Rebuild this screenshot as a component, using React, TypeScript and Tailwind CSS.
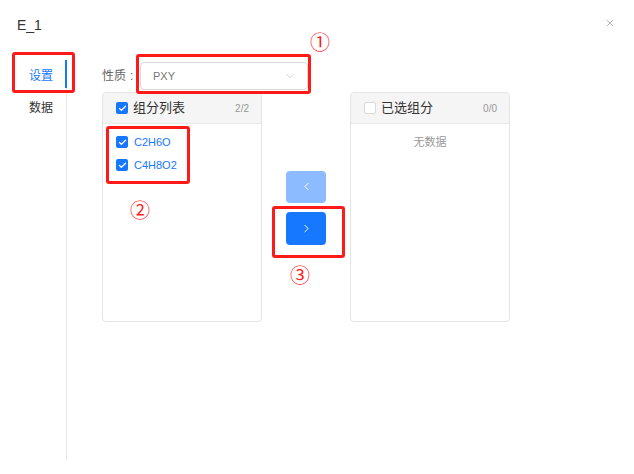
import { ChevronDown, ChevronLeft, ChevronRight, X, Check } from "lucide-react";

const Box = ({ checked }: { checked: boolean }) => (
    <span
        className={
            checked
                ? "flex h-[12px] w-[12px] items-center justify-center rounded-[2px] bg-[#1677ff]"
                : "flex h-[12px] w-[12px] rounded-[2px] border border-[#d9d9d9] bg-white"
        }
    >
        {checked && <Check size={9} strokeWidth={3.5} color="#fff" />}
    </span>
);

const Mark = ({ className }: { className: string }) => (
    <div className={"absolute rounded-[3px] border-[3px] border-[#ff1a1a] " + className} />
);

const Num = ({ className, n }: { className: string; n: string }) => (
    <span className={"absolute text-[20px] leading-none text-[#ff1a1a] " + className}>{n}</span>
);

const App = (): JSX.Element => {
    return (
        <div
            className="relative h-[474px] w-[634px] overflow-hidden bg-white text-[#333]"
            style={{ fontFamily: '"Liberation Sans", "Noto Sans CJK SC", sans-serif' }}
        >
            <header className="flex h-[50px] items-start justify-between pl-[17px] pr-[18px] pt-[16px]">
                <h1 className="text-[14px] leading-[18px] text-[#333]">E_1</h1>
                <X size={12} strokeWidth={1.4} color="#999" className="mt-[1px]" />
            </header>

            <div className="mt-[10px] flex">
                {/* side tabs */}
                <aside className="h-[400px] w-[67px] border-r border-[#e8e8e8] text-[12px]">
                    <div className="relative flex h-[32px] items-center pl-[29px] text-[#1677ff]">
                        设置
                        <span className="absolute right-[-1px] top-0 h-[28px] w-[2px] bg-[#1677ff]" />
                    </div>
                    <div className="flex h-[32px] items-center pl-[29px] text-[#333]">数据</div>
                </aside>

                <main className="flex-1 pl-[35px] pt-[2px]">
                    <div className="flex items-center text-[12px]">
                        <span className="flex w-[38px] text-[#666]">
                            性质<span className="ml-[4px]">:</span>
                        </span>
                        <div className="flex h-[28px] w-[168px] items-center justify-between rounded-[4px] border border-[#d9d9d9] pl-[12px] pr-[10px] text-[11px] text-[#777]">
                            PXY
                            <ChevronDown size={14} strokeWidth={1.2} color="#bfbfbf" />
                        </div>
                    </div>

                    <div className="mt-[2px] flex">
                        {/* source list */}
                        <div className="h-[230px] w-[160px] overflow-hidden rounded-[4px] border border-[#e4e4e4]">
                            <div className="flex h-[31px] items-center border-b border-[#e8e8e8] bg-[#f5f5f5] pl-[13px] pr-[12px]">
                                <Box checked />
                                <span className="ml-[5px] text-[13px] text-[#333]">组分列表</span>
                                <span className="ml-auto text-[10px] text-[#999]">2/2</span>
                            </div>
                            <div className="flex flex-col gap-[11px] pl-[13px] pt-[12px]">
                                <div className="flex items-center gap-[6px] text-[11px] leading-[12px] text-[#1677ff]">
                                    <Box checked />
                                    C2H6O
                                </div>
                                <div className="flex items-center gap-[6px] text-[11px] leading-[12px] text-[#1677ff]">
                                    <Box checked />
                                    C4H8O2
                                </div>
                            </div>
                        </div>

                        <div className="flex w-[88px] flex-col items-center justify-center gap-[9px] pt-[1px]">
                            <button className="flex h-[32px] w-[40px] items-center justify-center rounded-[4px] bg-[#8cbcff]">
                                <ChevronLeft size={13} strokeWidth={1.8} color="#fff" />
                            </button>
                            <button className="flex h-[33px] w-[40px] items-center justify-center rounded-[4px] bg-[#1677ff]">
                                <ChevronRight size={13} strokeWidth={1.8} color="#fff" />
                            </button>
                        </div>

                        {/* target list */}
                        <div className="h-[230px] w-[160px] overflow-hidden rounded-[4px] border border-[#e4e4e4]">
                            <div className="flex h-[31px] items-center border-b border-[#e8e8e8] bg-[#f5f5f5] pl-[13px] pr-[12px]">
                                <Box checked={false} />
                                <span className="ml-[5px] text-[13px] text-[#333]">已选组分</span>
                                <span className="ml-auto text-[10px] text-[#999]">0/0</span>
                            </div>
                            <div className="pt-[10px] text-center text-[11px] text-[#999]">无数据</div>
                        </div>
                    </div>
                </main>
            </div>

            {/* annotations */}
            <Mark className="left-[12px] top-[52px] h-[41px] w-[63px]" />
            <Mark className="left-[136px] top-[54px] h-[40px] w-[175px]" />
            <Mark className="left-[106px] top-[126px] h-[58px] w-[84px]" />
            <Mark className="left-[272px] top-[206px] h-[52px] w-[73px]" />
            <Num className="left-[310px] top-[33px]" n="①" />
            <Num className="left-[130px] top-[201px]" n="②" />
            <Num className="left-[290px] top-[266px]" n="③" />
        </div>
    );
};

export default App;
